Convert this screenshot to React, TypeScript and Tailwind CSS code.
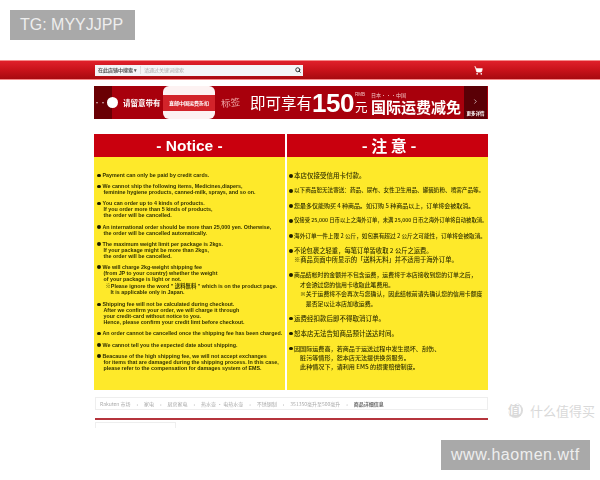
import { ChevronRight, Search, ShoppingCart } from "lucide-react";

const sans = "font-['Liberation_Sans','Noto_Sans_CJK_SC',sans-serif]";
const cjk = "font-['Noto_Sans_CJK_SC','Liberation_Sans',sans-serif]";

const notice: { lines: string[]; note?: string[] }[] = [
  { lines: ["Payment can only be paid by credit cards."] },
  { lines: ["We cannot ship the following items, Medicines,diapers,", "feminine hygiene products, canned-milk, sprays, and so on."] },
  { lines: ["You can order up to 4 kinds of products.", "If you order more than 5 kinds of products,", "the order will be cancelled."] },
  { lines: ["An international order should be more than 25,000 yen. Otherwise,", "the order will be cancelled automatically."] },
  { lines: ["The maximum weight limit per package is 2kgs.", "If your package might be more than 2kgs,", "the order will be cancelled."] },
  {
    lines: ["We will charge 2kg-weight shipping fee", "(from JP to your country) whether the weight", "of your package is light or not."],
    note: ["※Please ignore the word \" 送料無料 \" which is on the product page.", "It is applicable only in Japan."],
  },
  { lines: ["Shipping fee will not be calculated during checkout.", "After we confirm your order, we will charge it through", "your credit-card without notice to you.", "Hence, please confirm your credit limt before checkout."] },
  { lines: ["An order cannot be cancelled once the shipping fee has been charged."] },
  { lines: ["We cannot tell you the expected date about shipping."] },
  { lines: ["Beacause of the high shipping fee, we will not accept exchanges", "for items that are damaged during the shipping process. In this case,", "please refer to the compensation for damages system of EMS."] },
];

const notes: { lines: string[]; size: string }[] = [
  { lines: ["本店仅接受信用卡付款。"], size: "text-[6.5px]" },
  { lines: ["以下商品恕无法寄送：药品、尿布、女性卫生用品、罐装奶粉、喷雾产品等。"], size: "text-[5.6px]" },
  { lines: ["您最多仅能购买 4 种商品。如订购 5 种商品以上，订单将会被取消。"], size: "text-[6px]" },
  { lines: ["仅接受 25,000 日币以上之海外订单，未满 25,000 日币之海外订单将自动被取消。"], size: "text-[5.35px]" },
  { lines: ["海外订单一件上限 2 公斤，如包裹有超过 2 公斤之可能性，订单将会被取消。"], size: "text-[5.65px]" },
  { lines: ["不论包裹之轻重，每笔订单皆收取 2 公斤之运费。", "※商品页面中所显示的「送料无料」并不适用于海外订单。"], size: "text-[6.3px]" },
  { lines: ["商品结帐时的金额并不包含运费，运费将于本店接收到您的订单之后，", "　才会透过您的信用卡收取此笔费用。", "　※关于运费将不会再次与您确认，因此结帐前请先确认您的信用卡额度", "　　是否足以让本店加收运费。"], size: "text-[5.9px]" },
  { lines: ["运费经扣款后即不得取消订单。"], size: "text-[6.5px]" },
  { lines: ["恕本店无法告知商品预计送达时间。"], size: "text-[6.5px]" },
  { lines: ["因国际运费高，若商品于运送过程中发生损坏、刮伤、", "　脏污等情形，恕本店无法提供换货服务。", "　此种情况下，请利用 EMS 的损害赔偿制度。"], size: "text-[6.1px]" },
];

const crumbs = ["Rakuten 市场", "家电", "厨房家电", "热水壶 · 电热水壶", "不锈钢制", "351350毫升至500毫升", "商品详细信息"];

export default function App() {
  return (
    <div className="relative w-[600px] h-[480px] overflow-hidden bg-white pt-[60px]">
      {/* shop header */}
      <div className="h-[20px] border-y border-[#f58a8a] bg-gradient-to-b from-[#e0202a] via-[#c8121a] to-[#a80a10] flex items-center pl-[95px]">
        <div className={`w-[208px] h-[11px] bg-[#f4f4f6] flex items-center text-[5px] blur-[0.3px] ${cjk}`}>
          <span className="w-[46px] pl-[3px] font-bold text-[#555] border-r border-[#ddd] whitespace-nowrap">在此店铺中搜索 ▾</span>
          <span className="pl-[3px] text-[#aaa] flex-1">请通过关键词搜索</span>
          <Search className="w-[6px] h-[6px] text-[#333] mr-[2px]" strokeWidth={4} />
        </div>
        <ShoppingCart className="ml-[171px] w-[9px] h-[9px] text-white fill-white" />
      </div>

      {/* banner */}
      <div className={`mt-[6px] ml-[94px] w-[394px] h-[33px] bg-[#a8000c] flex items-center overflow-hidden text-white blur-[0.3px] ${cjk}`}>
        <div className="w-[18px] h-full bg-[#6a0004] flex items-center justify-end text-[6px] leading-none">···</div>
        <span className="ml-[-5px] w-[11px] h-[11px] rounded-full bg-white shrink-0" />
        <span className="ml-[5px] w-[40px] text-[7.5px] font-bold whitespace-nowrap">请留意带有</span>
        <div className="w-[52px] h-full rounded-[6px] bg-[#fdf2f2] flex items-center">
          <span className="w-full h-[16px] bg-[#d2232a] text-[5px] font-bold leading-[16px] text-center whitespace-nowrap">直邮中国运费折扣</span>
        </div>
        <span className="ml-[6px] w-[22px] text-[9.5px] text-[#f0a8a8] -rotate-6 whitespace-nowrap">标签</span>
        <span className="ml-[7px] w-[62px] text-[15.5px] whitespace-nowrap">即可享有</span>
        <span className={`w-[43px] text-[26px] font-bold leading-none tracking-[-0.5px] ${sans}`}>150</span>
        <div className="w-[16px] flex flex-col text-[#f3c4c4] mt-[3px]">
          <span className={`text-[4.5px] leading-[6px] ${sans}`}>RMB</span>
          <span className="text-[12.5px] leading-[18px] text-white">元</span>
        </div>
        <div className="w-[93px] flex flex-col mt-[3px]">
          <span className="text-[5px] leading-[6px] text-[#f3c4c4]">日本···中国</span>
          <span className="text-[15px] leading-[18px] font-bold whitespace-nowrap">国际运费减免</span>
        </div>
        <div className="w-[23px] h-full bg-[#5a0006] flex flex-col items-center justify-end pb-[2px]">
          <ChevronRight className="w-[7px] h-[7px] mb-[5px]" />
          <span className="text-[4.5px] font-bold leading-[7px] whitespace-nowrap">更多详情</span>
        </div>
      </div>

      {/* notice panels */}
      <div className="mt-[15px] ml-[94px] w-[394px] h-[256px] flex gap-[2px] blur-[0.3px]">
        <section className="w-[191px] bg-[#fee92a] flex flex-col">
          <h2 className={`h-[23px] bg-[#c9000e] text-white text-center text-[15.5px] font-bold leading-[23px] ${sans}`}>- Notice -</h2>
          <div className={`pt-[15px] pl-[8px] flex flex-col gap-[5.2px] text-[5.35px] font-bold leading-[6px] text-[#333300] ${sans}`}>
            {notice.map((item) => (
              <div key={item.lines[0]} className="relative pl-[0.5px] whitespace-nowrap">
                <span className="absolute left-[-5px] top-[1.5px] w-[3.5px] h-[3.5px] rounded-full bg-[#1d1d00]" />
                {item.lines.map((line, i) => (
                  <div key={line} className={i > 0 ? "pl-[1px]" : ""}>{line}</div>
                ))}
                {item.note && (
                  <div className="mt-[1px] pl-[3px] leading-[6.5px]">
                    {item.note.map((line, i) => (
                      <div key={line} className={i > 0 ? "pl-[5px]" : ""}>{line}</div>
                    ))}
                  </div>
                )}
              </div>
            ))}
          </div>
        </section>
        <section className="w-[201px] bg-[#fee92a] flex flex-col">
          <h2 className={`h-[23px] bg-[#c9000e] text-white text-center text-[16px] font-bold leading-[23px] pl-[3px] ${cjk}`}>- 注 意 -</h2>
          <div className={`pt-[14px] pl-[7px] flex flex-col gap-[5.6px] font-medium leading-[9.4px] text-[#333300] ${cjk}`}>
            {notes.map((item) => (
              <div key={item.lines[0]} className={`relative whitespace-nowrap ${item.size}`}>
                <span className="absolute left-[-5px] top-[3px] w-[3.5px] h-[3.5px] rounded-full bg-[#1d1d00]" />
                {item.lines.map((line) => (
                  <div key={line}>{line}</div>
                ))}
              </div>
            ))}
          </div>
        </section>
      </div>

      {/* breadcrumb */}
      <div className={`mt-[7px] ml-[95px] w-[393px] h-[13px] border border-[#eee] flex items-center pl-[4px] gap-[6px] text-[5px] text-[#aaa] whitespace-nowrap blur-[0.3px] ${cjk}`}>
        {crumbs.map((crumb, i) => (
          <span key={crumb} className={i === crumbs.length - 1 ? "font-bold text-[#666]" : ""}>
            {crumb}
            {i < crumbs.length - 1 && <span className="ml-[6px]">›</span>}
          </span>
        ))}
      </div>
      <div className="mt-[8px] ml-[95px] w-[393px] h-[2px] bg-[#b5343c]" />
      <div className="mt-[2px] ml-[95px] w-[81px] h-[6px] border-x border-t border-[#eee]" />

      {/* watermarks */}
      <div className={`absolute left-[10px] top-[10px] w-[125px] h-[30px] bg-[#a9a9a9] text-[#eee] text-[16px] leading-[30px] pl-[10px] ${sans}`}>TG: MYYJJPP</div>
      <div className={`absolute left-[441px] top-[440px] w-[149px] h-[30px] bg-[#a9a9a9] text-[#eee] text-[16px] leading-[30px] pl-[10px] tracking-[0.55px] ${sans}`}>www.haomen.wtf</div>
      <div className={`absolute left-[508px] top-[403px] flex items-center text-[#d9d9d9] ${cjk}`}>
        <span className="w-[15px] h-[15px] rounded-full border-r-2 border-b-2 border-[#dcdcdc] text-[12px] leading-[14px] font-bold">值</span>
        <span className="ml-[7px] text-[13px] leading-[15px] whitespace-nowrap">什么值得买</span>
      </div>
    </div>
  );
}
